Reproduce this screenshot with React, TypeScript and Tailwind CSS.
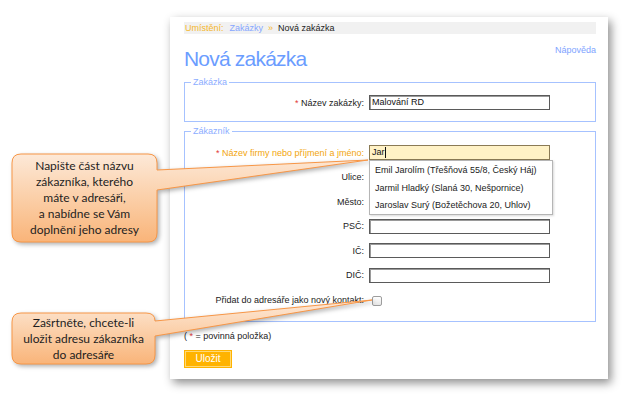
import React from "react";

function Row({
  label,
  required,
  orange,
  children,
}: {
  label: string;
  required?: boolean;
  orange?: boolean;
  children: React.ReactNode;
}) {
  return (
    <div className="flex items-center h-[15px]">
      <div
        className={
          "w-[179px] text-right whitespace-nowrap " +
          (orange ? "text-[#f2a50c]" : "text-[#222]")
        }
      >
        {required && <span className="text-[#e23a3a]">* </span>}
        {label}
      </div>
      <div className="ml-[5px] relative">{children}</div>
    </div>
  );
}

function Input({ value }: { value?: string }) {
  return (
    <div className="w-[181px] h-[15px] border border-[#5a5a5a] bg-white shadow-[inset_1px_1px_0_#9a9a9a] pl-[2px] leading-[13px] text-[#111]">
      {value}
    </div>
  );
}

export default function App() {
  return (
    <div className="relative w-[626px] h-[398px] bg-white overflow-hidden font-['Liberation_Sans',Arial,sans-serif] text-[9px] leading-[12px]">
      <div className="pl-[170px] pt-[17px]">
        <div className="w-[438px] h-[362px] bg-white shadow-[3px_4px_9px_rgba(0,0,0,0.45)] pl-[14px] pr-[12px] pt-[5px]">
          {/* breadcrumb */}
          <div className="h-[12px] bg-[#f1f1f1] flex items-center pl-[1px] whitespace-nowrap">
            <span className="text-[#f5b62a]">Umístění:</span>
            <span className="text-[#86a6ff] ml-[6px]">Zakázky</span>
            <span className="text-[#f5b62a] ml-[5px]">»</span>
            <span className="text-[#222] ml-[5px]">Nová zakázka</span>
          </div>

          {/* heading */}
          <div className="flex justify-between items-start mt-[13px]">
            <h1 className="text-[21px] leading-[24px] tracking-[-0.8px] text-[#6b9dff]">
              Nová zakázka
            </h1>
            <a className="text-[#7ea3ff] -mt-[3px]">Nápověda</a>
          </div>

          {/* fieldset 1 */}
          <fieldset className="mt-[5px] border border-[#a6c2ff] pt-[7px] pb-[11px]">
            <legend className="ml-[6px] px-[2px] text-[#8cadff] leading-[12px]">
              Zakázka
            </legend>
            <Row label="Název zakázky:" required>
              <Input value="Malování RD" />
            </Row>
          </fieldset>

          {/* fieldset 2 */}
          <fieldset className="mt-[3px] border border-[#a6c2ff] pt-[8px] pb-[14px]">
            <legend className="ml-[6px] px-[2px] text-[#8cadff] leading-[12px]">
              Zákazník
            </legend>
            <div className="flex flex-col gap-y-[9.5px]">
              <Row label="Název firmy nebo příjmení a jméno:" required orange>
                <div className="w-[181px] h-[15px] border border-[#8a7a55] bg-[#fff2c6] pl-[2px] leading-[13px] text-[#111] flex items-center">
                  <span>Jar</span>
                  <span className="w-[1px] h-[11px] bg-[#111]" />
                </div>
                <div className="absolute left-0 top-[15px] z-10 w-[184px] h-[55px] bg-white border border-[#b5b5b5] shadow-[1px_1px_2px_rgba(0,0,0,0.15)] pl-[5px] pt-[3px] flex flex-col gap-y-[5.5px] text-[#222] whitespace-nowrap">
                  <div>Emil Jarolím (Třešňová 55/8, Český Háj)</div>
                  <div>Jarmil Hladký (Slaná 30, Nešpornice)</div>
                  <div>Jaroslav Surý (Božetěchova 20, Uhlov)</div>
                </div>
              </Row>
              <Row label="Ulice:">
                <Input />
              </Row>
              <Row label="Město:">
                <Input />
              </Row>
              <Row label="PSČ:">
                <Input />
              </Row>
              <Row label="IČ:">
                <Input />
              </Row>
              <Row label="DIČ:">
                <Input />
              </Row>
              <Row label="Přidat do adresáře jako nový kontakt:">
                <div className="ml-[3px] mt-[2px] w-[10px] h-[10px] border border-[#9d9d9d] rounded-[2px] bg-gradient-to-b from-white to-[#e6e6e6]" />
              </Row>
            </div>
          </fieldset>

          <div className="mt-[8px] text-[#222]">
            ( <span className="text-[#e23a3a]">*</span> = povinná položka)
          </div>

          <button className="mt-[8px] w-[48px] h-[18px] bg-[#ffb300] border border-[#ffb300] shadow-[inset_0_0_0_1px_#ffd976] text-white text-[10px] leading-[14px] block">
            Uložit
          </button>
        </div>
      </div>

      {/* callout shapes */}
      <svg
        className="absolute left-0 top-0 pointer-events-none drop-shadow-[2px_2px_2px_rgba(0,0,0,0.3)]"
        width="626"
        height="398"
        viewBox="0 0 626 398"
      >
        <defs>
          <linearGradient id="g1" x1="0" y1="0" x2="0" y2="1">
            <stop offset="0" stopColor="#fde9d8" />
            <stop offset="0.5" stopColor="#fbcfa8" />
            <stop offset="1" stopColor="#f9b479" />
          </linearGradient>
        </defs>
        <path
          d="M21,154 H148 Q157,154 157,163 V170 L368,160 L157,190 V233 Q157,242 148,242 H21 Q12,242 12,233 V163 Q12,154 21,154 Z"
          fill="url(#g1)"
          stroke="#f79646"
          strokeWidth="1"
        />
        <path
          d="M21,313 H146 Q155,313 155,321 L372,300 L155,336 V355 Q155,364 146,364 H21 Q12,364 12,355 V322 Q12,313 21,313 Z"
          fill="url(#g1)"
          stroke="#f79646"
          strokeWidth="1"
        />
      </svg>

      {/* callout texts */}
      <div className="absolute left-[12px] top-[154px] w-[145px] h-[88px] flex items-center justify-center text-center font-['Lato',sans-serif] text-[12px] leading-[16px] text-[#1e1e1e]">
        Napište část názvu
        <br />
        zákazníka, kterého
        <br />
        máte v adresáři,
        <br />a nabídne se Vám
        <br />
        doplnění jeho adresy
      </div>
      <div className="absolute left-[12px] top-[313px] w-[143px] h-[51px] flex items-center justify-center text-center font-['Lato',sans-serif] text-[12px] leading-[16px] text-[#1e1e1e]">
        Zašrtněte, chcete-li
        <br />
        uložit adresu zákazníka
        <br />
        do adresáře
      </div>
    </div>
  );
}
